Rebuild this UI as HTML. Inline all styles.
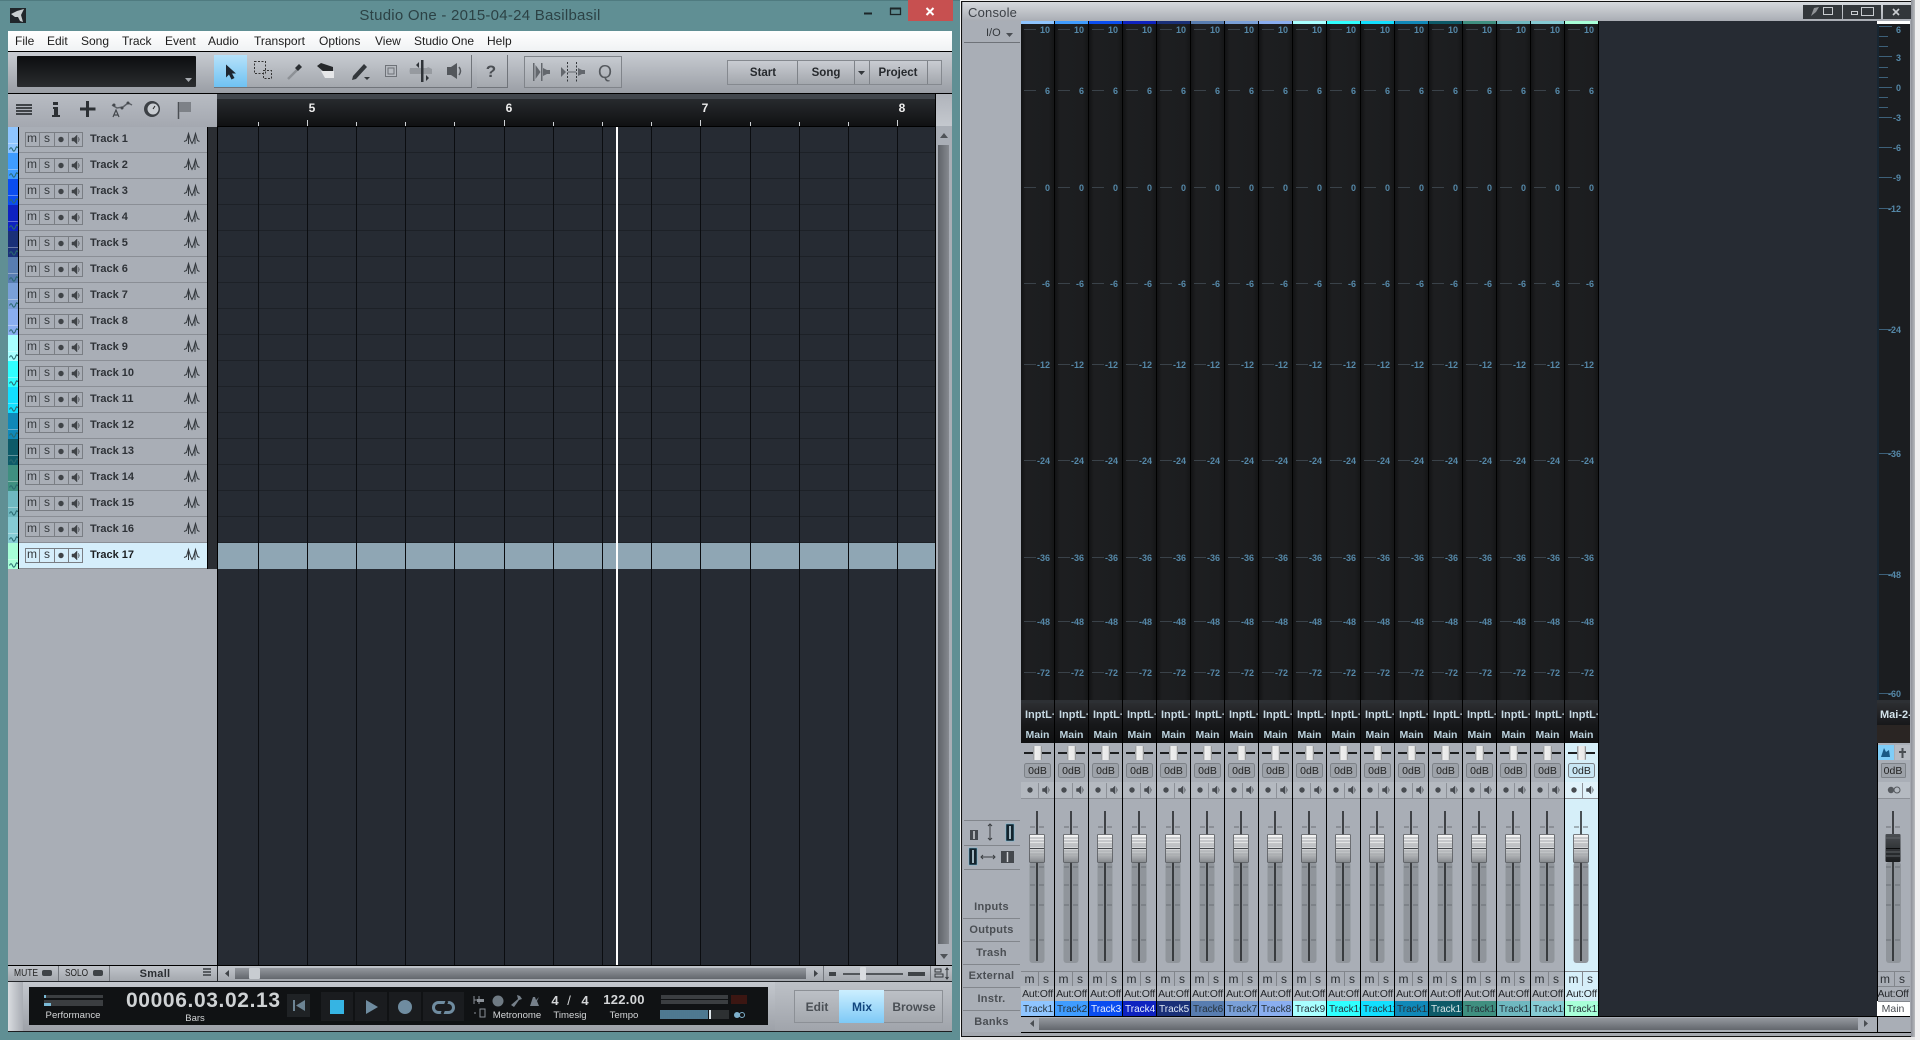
<!DOCTYPE html>
<html><head><meta charset="utf-8"><title>Studio One</title>
<style>
html,body{margin:0;padding:0}
body{width:1920px;height:1040px;overflow:hidden;position:relative;background:#f0f0f0;font-family:"Liberation Sans",sans-serif}
.a{position:absolute}
.x{position:absolute;white-space:nowrap;z-index:3}
.c{transform:translateX(-50%)}
.mn{font-size:12px;color:#1c1c1c;top:34px;line-height:15px}
.ov{position:absolute;left:0;top:0;z-index:2}
.t{position:absolute;left:19px;width:188px;height:26px;box-sizing:border-box;background:#a9aeb6;border-bottom:1px solid #8a8e95}
.st{position:absolute;left:8px;width:10px;height:26px}
.x.tn{left:90px;font-size:11px;font-weight:bold;color:#2e3237;line-height:14px;margin-top:1px}
.x.bm{font-size:12px;color:#33373b;line-height:12px;text-align:center;width:14px}
.ch{position:absolute;top:0;width:34px;height:1016px;box-sizing:border-box;background:#a9aeb6;border-right:1px solid #000}
.ct{position:absolute;left:0;right:0;top:21px;height:3px;background:var(--c)}
.mt{position:absolute;left:0;right:0;top:24px;height:679px;background:linear-gradient(90deg,#121314,#1d1e20 15%,#1c1d1f 85%,#151617)}
.mt b{position:absolute;left:3px;width:26px;margin-top:1px;text-align:right;font-size:9px;line-height:12px;color:#5588a8;z-index:3}
.mt b:before{content:"";position:absolute;left:0;width:12px;top:5px;height:1px;background:#3a4249}
.mt b:nth-child(1){top:-1px}.mt b:nth-child(2){top:60px}.mt b:nth-child(3){top:157px}.mt b:nth-child(4){top:253px}.mt b:nth-child(5){top:334px}.mt b:nth-child(6){top:430px}.mt b:nth-child(7){top:527px}.mt b:nth-child(8){top:591px}.mt b:nth-child(9){top:642px}
.ch p{position:absolute;margin:0;z-index:3;white-space:nowrap;overflow:hidden;text-align:center;left:0;width:33px}
.ch p.i{top:703px;height:22px;line-height:24px;font-size:11px;font-weight:bold;color:#c6d8e2;background:linear-gradient(#2c2e31,#17181a);text-align:left;padding-left:4px;width:29px}
.ch p.o{top:725px;height:18px;line-height:20px;font-size:10.5px;font-weight:bold;color:#bcd3de;background:linear-gradient(#17181a,#0f1011)}
.ch p.d{top:764px;height:14px;line-height:14px;font-size:10.5px;color:#222}
.ch p.m,.ch p.s{top:972px;height:14px;line-height:15px;font-size:12px;color:#2c3034;width:17px}
.ch p.s{left:17px;width:16px}
.ch p.u{top:986px;height:15px;line-height:16px;font-size:10.5px;color:#23262a;letter-spacing:-.25px;background:#b3b8bf}
.ch p.n{top:1001px;height:15px;line-height:17px;font-size:10px;background:var(--c);color:var(--f,#26323a);text-align:left;padding-left:2px;width:31px}
.lc{left:963px;width:57px;text-align:center;font-size:11px;font-weight:bold;color:#4a4e53;line-height:23px;height:22px;border-bottom:1px solid #82868c;letter-spacing:.3px}
.wt{color:#d4d6d8;line-height:13px}
.ml{right:19px;font-size:9px;font-weight:bold;color:#5588a8;line-height:12px}
</style></head>
<body>
<!-- left window -->
<div class="a" style="left:0;top:0;width:960px;height:1040px;background:#608f94;border-top:1px solid #4f7b80;box-sizing:border-box"></div>
<div class="a" style="left:908px;top:0;width:45px;height:21px;background:#c75050"></div>
<div class="x c" style="left:480px;top:7px;font-size:15px;color:#2c4245;line-height:18px;letter-spacing:.25px">Studio One - 2015-04-24 Basilbasil</div>
<div class="a" style="left:8px;top:31px;width:944px;height:20px;background:linear-gradient(#fff,#f0f2f4)"></div>
<div class="a" style="left:8px;top:51px;width:944px;height:1px;background:#000"></div>
<span class="x mn" style="left:15px">File</span><span class="x mn" style="left:47px">Edit</span><span class="x mn" style="left:81px">Song</span><span class="x mn" style="left:122px">Track</span><span class="x mn" style="left:165px">Event</span><span class="x mn" style="left:208px">Audio</span><span class="x mn" style="left:254px">Transport</span><span class="x mn" style="left:319px">Options</span><span class="x mn" style="left:375px">View</span><span class="x mn" style="left:414px">Studio One</span><span class="x mn" style="left:487px">Help</span>
<!-- toolbar -->
<div class="a" style="left:8px;top:52px;width:944px;height:41px;background:linear-gradient(#c8ccd2,#9a9ea5)"></div>
<div class="a" style="left:8px;top:93px;width:944px;height:1px;background:#000"></div>
<div class="a" style="left:17px;top:56px;width:179px;height:31px;background:linear-gradient(#0c0d0f,#2a2c2f);border-radius:1px"></div>
<div class="a" style="left:214px;top:55px;width:258px;height:33px;background:linear-gradient(#c6cad0,#a4a8ae);border-right:1px solid #70747a;border-bottom:1px solid #70747a;box-sizing:border-box"></div>
<div class="a" style="left:214px;top:55px;width:33px;height:32px;background:linear-gradient(#b6e2fa,#6fc2f2)"></div>
<div class="a" style="left:477px;top:55px;width:31px;height:33px;background:linear-gradient(#c6cad0,#a4a8ae);border-right:1px solid #70747a;border-bottom:1px solid #70747a;box-sizing:border-box"></div>
<div class="x c" style="left:491px;top:62px;font-size:17px;font-weight:bold;color:#4b4f54;line-height:20px">?</div>
<div class="a" style="left:524px;top:56px;width:98px;height:32px;background:linear-gradient(#c6cad0,#a4a8ae);border:1px solid #80848a;box-sizing:border-box"></div>
<div class="x c" style="left:605px;top:62px;font-size:18px;color:#54585d;line-height:20px">Q</div>
<div class="a" style="left:727px;top:60px;width:215px;height:25px;background:linear-gradient(#c9ccd2,#a3a7ad);border:1px solid #85898f;box-sizing:border-box"></div>
<div class="x c" style="left:763px;top:66px;font-size:11.5px;font-weight:bold;color:#26292d;line-height:14px">Start</div>
<div class="x c" style="left:826px;top:66px;font-size:11.5px;font-weight:bold;color:#26292d;line-height:14px">Song</div>
<div class="x c" style="left:898px;top:66px;font-size:11.5px;font-weight:bold;color:#26292d;line-height:14px">Project</div>
<!-- header row -->
<div class="a" style="left:8px;top:94px;width:209px;height:33px;background:linear-gradient(#b8bcc3,#a4a8b0)"></div>
<div class="a" style="left:217px;top:94px;width:718px;height:5px;background:#41464c"></div>
<div class="a" style="left:217px;top:99px;width:718px;height:27px;background:linear-gradient(#272a2e,#101113)"></div>
<div class="a" style="left:217px;top:126px;width:735px;height:1px;background:#000"></div>
<span class="x c" style="left:312px;top:101px;font-size:12px;font-weight:bold;color:#eee;line-height:14px">5</span>
<span class="x c" style="left:509px;top:101px;font-size:12px;font-weight:bold;color:#eee;line-height:14px">6</span>
<span class="x c" style="left:705px;top:101px;font-size:12px;font-weight:bold;color:#eee;line-height:14px">7</span>
<span class="x c" style="left:902px;top:101px;font-size:12px;font-weight:bold;color:#eee;line-height:14px">8</span>
<!-- side scroll -->
<div class="a" style="left:935px;top:94px;width:17px;height:872px;background:#a9aeb6;border-left:1px solid #000;box-sizing:border-box"></div>
<div class="a" style="left:936px;top:94px;width:16px;height:32px;background:linear-gradient(#b0b4bb,#c4c8ce)"></div>
<div class="a" style="left:938px;top:145px;width:11px;height:799px;background:linear-gradient(90deg,#5f6369,#85898f)"></div>
<!-- arrangement -->
<div class="a" style="left:217px;top:127px;width:718px;height:838px;background:#262b33"></div>
<div class="a" style="left:218px;top:127px;width:717px;height:442px;background:repeating-linear-gradient(#262b33 0 25px,#1d2127 25px 26px)"></div>
<div class="a" style="left:218px;top:543px;width:717px;height:26px;background:#8fa6b4"></div>
<!-- track list -->
<div class="a" style="left:8px;top:127px;width:210px;height:838px;background:#a9aeb6"></div>
<div class="a" style="left:207px;top:127px;width:10px;height:442px;background:#2b2e33;border-left:1px solid #000;box-sizing:border-box"></div>
<div class="a" style="left:18px;top:127px;width:1px;height:442px;background:#000"></div>
<div class="t" style="top:127px"></div><div class="st" style="top:127px;background:#8fc5ff"></div><span class="x tn" style="top:131px">Track 1</span>
<div class="t" style="top:153px"></div><div class="st" style="top:153px;background:#3f9cff"></div><span class="x tn" style="top:157px">Track 2</span>
<div class="t" style="top:179px"></div><div class="st" style="top:179px;background:#0a4df0"></div><span class="x tn" style="top:183px">Track 3</span>
<div class="t" style="top:205px"></div><div class="st" style="top:205px;background:#0e22c0"></div><span class="x tn" style="top:209px">Track 4</span>
<div class="t" style="top:231px"></div><div class="st" style="top:231px;background:#1a3078"></div><span class="x tn" style="top:235px">Track 5</span>
<div class="t" style="top:257px"></div><div class="st" style="top:257px;background:#587db0"></div><span class="x tn" style="top:261px">Track 6</span>
<div class="t" style="top:283px"></div><div class="st" style="top:283px;background:#7aa0d8"></div><span class="x tn" style="top:287px">Track 7</span>
<div class="t" style="top:309px"></div><div class="st" style="top:309px;background:#8aaef0"></div><span class="x tn" style="top:313px">Track 8</span>
<div class="t" style="top:335px"></div><div class="st" style="top:335px;background:#a8ffff"></div><span class="x tn" style="top:339px">Track 9</span>
<div class="t" style="top:361px"></div><div class="st" style="top:361px;background:#30ffff"></div><span class="x tn" style="top:365px">Track 10</span>
<div class="t" style="top:387px"></div><div class="st" style="top:387px;background:#12dfff"></div><span class="x tn" style="top:391px">Track 11</span>
<div class="t" style="top:413px"></div><div class="st" style="top:413px;background:#1088b8"></div><span class="x tn" style="top:417px">Track 12</span>
<div class="t" style="top:439px"></div><div class="st" style="top:439px;background:#0d5a68"></div><span class="x tn" style="top:443px">Track 13</span>
<div class="t" style="top:465px"></div><div class="st" style="top:465px;background:#3f8f80"></div><span class="x tn" style="top:469px">Track 14</span>
<div class="t" style="top:491px"></div><div class="st" style="top:491px;background:#6fb8c0"></div><span class="x tn" style="top:495px">Track 15</span>
<div class="t" style="top:517px"></div><div class="st" style="top:517px;background:#86cbd4"></div><span class="x tn" style="top:521px">Track 16</span>
<div class="t" style="top:543px;background:#d5eefb"></div><div class="st" style="top:543px;background:#a8ffd8"></div><span class="x tn" style="top:547px;color:#1c1f22">Track 17</span>
<!-- m s labels track rows -->
<span class="x bm" style="left:25px;top:132px">m</span><span class="x bm" style="left:40px;top:132px">s</span>
<span class="x bm" style="left:25px;top:158px">m</span><span class="x bm" style="left:40px;top:158px">s</span>
<span class="x bm" style="left:25px;top:184px">m</span><span class="x bm" style="left:40px;top:184px">s</span>
<span class="x bm" style="left:25px;top:210px">m</span><span class="x bm" style="left:40px;top:210px">s</span>
<span class="x bm" style="left:25px;top:236px">m</span><span class="x bm" style="left:40px;top:236px">s</span>
<span class="x bm" style="left:25px;top:262px">m</span><span class="x bm" style="left:40px;top:262px">s</span>
<span class="x bm" style="left:25px;top:288px">m</span><span class="x bm" style="left:40px;top:288px">s</span>
<span class="x bm" style="left:25px;top:314px">m</span><span class="x bm" style="left:40px;top:314px">s</span>
<span class="x bm" style="left:25px;top:340px">m</span><span class="x bm" style="left:40px;top:340px">s</span>
<span class="x bm" style="left:25px;top:366px">m</span><span class="x bm" style="left:40px;top:366px">s</span>
<span class="x bm" style="left:25px;top:392px">m</span><span class="x bm" style="left:40px;top:392px">s</span>
<span class="x bm" style="left:25px;top:418px">m</span><span class="x bm" style="left:40px;top:418px">s</span>
<span class="x bm" style="left:25px;top:444px">m</span><span class="x bm" style="left:40px;top:444px">s</span>
<span class="x bm" style="left:25px;top:470px">m</span><span class="x bm" style="left:40px;top:470px">s</span>
<span class="x bm" style="left:25px;top:496px">m</span><span class="x bm" style="left:40px;top:496px">s</span>
<span class="x bm" style="left:25px;top:522px">m</span><span class="x bm" style="left:40px;top:522px">s</span>
<span class="x bm" style="left:25px;top:548px">m</span><span class="x bm" style="left:40px;top:548px">s</span>
<!-- bottom bar -->
<div class="a" style="left:8px;top:965px;width:944px;height:1px;background:#000"></div>
<div class="a" style="left:8px;top:966px;width:944px;height:15px;background:linear-gradient(#c0c4ca,#a4a8ae)"></div>
<div class="a" style="left:8px;top:981px;width:944px;height:1px;background:#23262a"></div>
<span class="x" style="left:14px;top:968px;font-size:10px;color:#222;line-height:12px;transform:scaleX(.85);transform-origin:left">MUTE</span>
<span class="x" style="left:65px;top:968px;font-size:10px;color:#222;line-height:12px;transform:scaleX(.83);transform-origin:left">SOLO</span>
<span class="x c" style="left:155px;top:968px;font-size:11px;font-weight:bold;color:#2b2e32;line-height:13px;letter-spacing:.3px">Small</span>
<div class="a" style="left:235px;top:968px;width:571px;height:11px;background:linear-gradient(#94989e,#63676d)"></div>
<!-- transport -->
<div class="a" style="left:8px;top:982px;width:767px;height:49px;background:linear-gradient(#c4c8ce,#9da1a8)"></div>
<div class="a" style="left:8px;top:982px;width:15px;height:49px;background:linear-gradient(90deg,#d9dce0,#a8acb3)"></div>
<div class="a" style="left:775px;top:982px;width:177px;height:49px;background:linear-gradient(#bdc1c7,#a0a4ab)"></div>
<div class="a" style="left:8px;top:1031px;width:944px;height:1px;background:#1b1d20"></div>
<div class="a" style="left:29px;top:987px;width:739px;height:38px;background:#101214"></div>
<div class="a" style="left:794px;top:990px;width:149px;height:33px;background:linear-gradient(#bcc0c6,#a4a8ae);border:1px solid #8c9096;box-sizing:border-box"></div>
<div class="a" style="left:839px;top:990px;width:45px;height:33px;background:linear-gradient(#ccefff,#7ec9f6)"></div>
<span class="x c" style="left:817px;top:1000px;font-size:12px;font-weight:bold;color:#4a4f55;line-height:14px">Edit</span>
<span class="x c" style="left:862px;top:1000px;font-size:12px;font-weight:bold;color:#12467e;line-height:14px">Mix</span>
<span class="x c" style="left:914px;top:1000px;font-size:12px;font-weight:bold;color:#4a4f55;line-height:14px">Browse</span>
<span class="x c wt" style="left:73px;top:1009px;font-size:9.6px">Performance</span>
<span class="x wt" style="left:126px;top:990px;font-size:21px;font-weight:bold;line-height:22px;letter-spacing:.62px;color:#cfd2d4">00006.03.02.13</span>
<span class="x c wt" style="left:195px;top:1012px;font-size:9.5px">Bars</span>
<span class="x c wt" style="left:517px;top:1009px;font-size:9.6px">Metronome</span>
<span class="x c wt" style="left:555px;top:993px;font-size:13px;font-weight:bold;line-height:15px">4</span>
<span class="x c wt" style="left:569px;top:993px;font-size:13px;line-height:15px">/</span>
<span class="x c wt" style="left:585px;top:993px;font-size:13px;font-weight:bold;line-height:15px">4</span>
<span class="x c wt" style="left:570px;top:1009px;font-size:9.6px">Timesig</span>
<span class="x c wt" style="left:624px;top:991px;font-size:13px;line-height:17px;letter-spacing:.3px;font-weight:bold">122.00</span>
<span class="x c wt" style="left:624px;top:1009px;font-size:9.6px">Tempo</span>

<!-- Console -->
<div class="a" style="left:960px;top:0;width:2px;height:1040px;background:#f2f3f4"></div>
<div class="a" style="left:961px;top:1px;width:952px;height:1036px;background:#a4a8af;border:1px solid #111;box-sizing:border-box"></div>
<div class="a" style="left:963px;top:21px;width:58px;height:1011px;background:#a9aeb6"></div>
<span class="x" style="left:986px;top:25px;font-size:11px;color:#33373b;line-height:16px">I/O</span>
<div class="a" style="left:964px;top:42px;width:56px;height:1px;background:#6e7278"></div>
<div class="a" style="left:1599px;top:21px;width:278px;height:995px;background:#262b33"></div>
<div class="a lc x" style="top:896px">Inputs</div>
<div class="a lc x" style="top:919px">Outputs</div>
<div class="a lc x" style="top:942px">Trash</div>
<div class="a lc x" style="top:965px">External</div>
<div class="a lc x" style="top:988px">Instr.</div>
<div class="a lc x" style="top:1011px;border-bottom:0">Banks</div>

<div class="ch" style="left:1021px;--c:#8fc5ff"><i class="ct"></i><div class="mt"><b>10</b><b>6</b><b>0</b><b>-6</b><b>-12</b><b>-24</b><b>-36</b><b>-48</b><b>-72</b></div><p class="i">InptL+</p><p class="o">Main</p><p class="d">0dB</p><p class="m">m</p><p class="s">s</p><p class="u">Aut:Off</p><p class="n">Track1</p></div>
<div class="ch" style="left:1055px;--c:#3f9cff"><i class="ct"></i><div class="mt"><b>10</b><b>6</b><b>0</b><b>-6</b><b>-12</b><b>-24</b><b>-36</b><b>-48</b><b>-72</b></div><p class="i">InptL+</p><p class="o">Main</p><p class="d">0dB</p><p class="m">m</p><p class="s">s</p><p class="u">Aut:Off</p><p class="n">Track2</p></div>
<div class="ch" style="left:1089px;--c:#0a4df0;--f:#e8f0ff"><i class="ct"></i><div class="mt"><b>10</b><b>6</b><b>0</b><b>-6</b><b>-12</b><b>-24</b><b>-36</b><b>-48</b><b>-72</b></div><p class="i">InptL+</p><p class="o">Main</p><p class="d">0dB</p><p class="m">m</p><p class="s">s</p><p class="u">Aut:Off</p><p class="n">Track3</p></div>
<div class="ch" style="left:1123px;--c:#0e22c0;--f:#e8f0ff"><i class="ct"></i><div class="mt"><b>10</b><b>6</b><b>0</b><b>-6</b><b>-12</b><b>-24</b><b>-36</b><b>-48</b><b>-72</b></div><p class="i">InptL+</p><p class="o">Main</p><p class="d">0dB</p><p class="m">m</p><p class="s">s</p><p class="u">Aut:Off</p><p class="n">Track4</p></div>
<div class="ch" style="left:1157px;--c:#1a3078;--f:#dfe8f5"><i class="ct"></i><div class="mt"><b>10</b><b>6</b><b>0</b><b>-6</b><b>-12</b><b>-24</b><b>-36</b><b>-48</b><b>-72</b></div><p class="i">InptL+</p><p class="o">Main</p><p class="d">0dB</p><p class="m">m</p><p class="s">s</p><p class="u">Aut:Off</p><p class="n">Track5</p></div>
<div class="ch" style="left:1191px;--c:#587db0"><i class="ct"></i><div class="mt"><b>10</b><b>6</b><b>0</b><b>-6</b><b>-12</b><b>-24</b><b>-36</b><b>-48</b><b>-72</b></div><p class="i">InptL+</p><p class="o">Main</p><p class="d">0dB</p><p class="m">m</p><p class="s">s</p><p class="u">Aut:Off</p><p class="n">Track6</p></div>
<div class="ch" style="left:1225px;--c:#7aa0d8"><i class="ct"></i><div class="mt"><b>10</b><b>6</b><b>0</b><b>-6</b><b>-12</b><b>-24</b><b>-36</b><b>-48</b><b>-72</b></div><p class="i">InptL+</p><p class="o">Main</p><p class="d">0dB</p><p class="m">m</p><p class="s">s</p><p class="u">Aut:Off</p><p class="n">Track7</p></div>
<div class="ch" style="left:1259px;--c:#8aaef0"><i class="ct"></i><div class="mt"><b>10</b><b>6</b><b>0</b><b>-6</b><b>-12</b><b>-24</b><b>-36</b><b>-48</b><b>-72</b></div><p class="i">InptL+</p><p class="o">Main</p><p class="d">0dB</p><p class="m">m</p><p class="s">s</p><p class="u">Aut:Off</p><p class="n">Track8</p></div>
<div class="ch" style="left:1293px;--c:#a8ffff"><i class="ct"></i><div class="mt"><b>10</b><b>6</b><b>0</b><b>-6</b><b>-12</b><b>-24</b><b>-36</b><b>-48</b><b>-72</b></div><p class="i">InptL+</p><p class="o">Main</p><p class="d">0dB</p><p class="m">m</p><p class="s">s</p><p class="u">Aut:Off</p><p class="n">Track9</p></div>
<div class="ch" style="left:1327px;--c:#30ffff"><i class="ct"></i><div class="mt"><b>10</b><b>6</b><b>0</b><b>-6</b><b>-12</b><b>-24</b><b>-36</b><b>-48</b><b>-72</b></div><p class="i">InptL+</p><p class="o">Main</p><p class="d">0dB</p><p class="m">m</p><p class="s">s</p><p class="u">Aut:Off</p><p class="n">Track10</p></div>
<div class="ch" style="left:1361px;--c:#12dfff"><i class="ct"></i><div class="mt"><b>10</b><b>6</b><b>0</b><b>-6</b><b>-12</b><b>-24</b><b>-36</b><b>-48</b><b>-72</b></div><p class="i">InptL+</p><p class="o">Main</p><p class="d">0dB</p><p class="m">m</p><p class="s">s</p><p class="u">Aut:Off</p><p class="n">Track11</p></div>
<div class="ch" style="left:1395px;--c:#1088b8"><i class="ct"></i><div class="mt"><b>10</b><b>6</b><b>0</b><b>-6</b><b>-12</b><b>-24</b><b>-36</b><b>-48</b><b>-72</b></div><p class="i">InptL+</p><p class="o">Main</p><p class="d">0dB</p><p class="m">m</p><p class="s">s</p><p class="u">Aut:Off</p><p class="n">Track12</p></div>
<div class="ch" style="left:1429px;--c:#0d5a68"><i class="ct"></i><div class="mt"><b>10</b><b>6</b><b>0</b><b>-6</b><b>-12</b><b>-24</b><b>-36</b><b>-48</b><b>-72</b></div><p class="i">InptL+</p><p class="o">Main</p><p class="d">0dB</p><p class="m">m</p><p class="s">s</p><p class="u">Aut:Off</p><p class="n" style="color:#d9e6e8">Track13</p></div>
<div class="ch" style="left:1463px;--c:#3f8f80"><i class="ct"></i><div class="mt"><b>10</b><b>6</b><b>0</b><b>-6</b><b>-12</b><b>-24</b><b>-36</b><b>-48</b><b>-72</b></div><p class="i">InptL+</p><p class="o">Main</p><p class="d">0dB</p><p class="m">m</p><p class="s">s</p><p class="u">Aut:Off</p><p class="n">Track14</p></div>
<div class="ch" style="left:1497px;--c:#6fb8c0"><i class="ct"></i><div class="mt"><b>10</b><b>6</b><b>0</b><b>-6</b><b>-12</b><b>-24</b><b>-36</b><b>-48</b><b>-72</b></div><p class="i">InptL+</p><p class="o">Main</p><p class="d">0dB</p><p class="m">m</p><p class="s">s</p><p class="u">Aut:Off</p><p class="n">Track15</p></div>
<div class="ch" style="left:1531px;--c:#86cbd4"><i class="ct"></i><div class="mt"><b>10</b><b>6</b><b>0</b><b>-6</b><b>-12</b><b>-24</b><b>-36</b><b>-48</b><b>-72</b></div><p class="i">InptL+</p><p class="o">Main</p><p class="d">0dB</p><p class="m">m</p><p class="s">s</p><p class="u">Aut:Off</p><p class="n">Track16</p></div>
<div class="ch" style="left:1565px;--c:#a8ffd8;background:#d6eff9"><i class="ct"></i><div class="mt"><b>10</b><b>6</b><b>0</b><b>-6</b><b>-12</b><b>-24</b><b>-36</b><b>-48</b><b>-72</b></div><p class="i">InptL+</p><p class="o">Main</p><p class="d">0dB</p><p class="m">m</p><p class="s">s</p><p class="u" style="background:#d6eff9">Aut:Off</p><p class="n">Track17</p></div>

<!-- console header above channels -->
<div class="a" style="left:963px;top:1px;width:948px;height:1px;background:#111;z-index:1"></div>
<div class="a" style="left:963px;top:2px;width:948px;height:19px;background:linear-gradient(#d6d9dd,#a9adb4);z-index:1"></div>
<div class="a" style="left:1021px;top:0;width:578px;height:1px;background:#f0f0f0;z-index:1"></div>
<span class="x" style="left:968px;top:5px;font-size:13px;color:#3c4046;line-height:16px;letter-spacing:.2px">Console</span>

<!-- console scrollbar & main -->
<div class="a" style="left:1021px;top:1016px;width:856px;height:16px;background:#a9aeb6;border-top:1px solid #000;box-sizing:border-box"></div>
<div class="a" style="left:1039px;top:1018px;width:819px;height:12px;background:linear-gradient(#94989e,#63676d)"></div>
<div class="a" style="left:1021px;top:1032px;width:890px;height:1px;background:#000"></div>
<div class="a" style="left:1877px;top:21px;width:33px;height:995px;background:#a9aeb6;border-left:1px solid #000;box-sizing:border-box"></div>
<div class="a" style="left:1877px;top:21px;width:33px;height:3px;background:#fff"></div>
<div class="a" style="left:1877px;top:24px;width:33px;height:679px;background:#1b1d20;border-left:2px solid #182632;box-sizing:border-box"></div>
<div class="a" style="left:1877px;top:703px;width:33px;height:22px;background:linear-gradient(#2c2e31,#17181a)"></div>
<div class="a" style="left:1877px;top:725px;width:33px;height:18px;background:#2a2523"></div>
<div class="a" style="left:1877px;top:1001px;width:33px;height:15px;background:#fff"></div>
<div class="a" style="left:1877px;top:1016px;width:33px;height:16px;background:#a9aeb6;border-left:1px solid #000;border-top:1px solid #000;box-sizing:border-box"></div>
<span class="x ml" style="top:24px">6</span>
<span class="x ml" style="top:52px">3</span>
<span class="x ml" style="top:82px">0</span>
<span class="x ml" style="top:112px">-3</span>
<span class="x ml" style="top:142px">-6</span>
<span class="x ml" style="top:172px">-9</span>
<span class="x ml" style="top:203px">-12</span>
<span class="x ml" style="top:324px">-24</span>
<span class="x ml" style="top:448px">-36</span>
<span class="x ml" style="top:569px">-48</span>
<span class="x ml" style="top:688px">-60</span>
<div class="x" style="left:1880px;top:708px;width:30px;overflow:hidden;font-size:11px;font-weight:bold;color:#d3e2ea;line-height:14px">Mai-2-</div>
<span class="x c" style="left:1893px;top:764px;font-size:10.5px;color:#222;line-height:14px">0dB</span>
<span class="x c" style="left:1885px;top:973px;font-size:12px;color:#2c3034;line-height:13px">m</span>
<span class="x c" style="left:1902px;top:973px;font-size:12px;color:#2c3034;line-height:13px">s</span>
<span class="x c" style="left:1893px;top:987px;font-size:10.5px;color:#23262a;line-height:15px;letter-spacing:-.2px">Aut:Off</span>
<span class="x c" style="left:1893px;top:1002px;font-size:10.5px;color:#4a4e53;line-height:15px">Main</span>

<!-- overlay shapes -->
<svg class="ov" width="1920" height="1040" viewBox="0 0 1920 1040" xmlns="http://www.w3.org/2000/svg">
<defs>
<linearGradient id="kg" x1="0" x2="0" y1="0" y2="1"><stop offset="0" stop-color="#f6f6f6"/><stop offset=".55" stop-color="#d0d2d4"/><stop offset="1" stop-color="#85898d"/></linearGradient>
<linearGradient id="kh" x1="0" x2="1" y1="0" y2="0"><stop offset="0" stop-color="#8a8d90"/><stop offset=".25" stop-color="#eee"/><stop offset=".8" stop-color="#e8e8e8"/><stop offset="1" stop-color="#77797c"/></linearGradient>
<linearGradient id="kd" x1="0" x2="0" y1="0" y2="1"><stop offset="0" stop-color="#4a4e52"/><stop offset="1" stop-color="#1a1c1e"/></linearGradient>
<g id="tr">
<rect x="25.5" y="5.5" width="57" height="14" fill="none" stroke="#7a7e84"/>
<path d="M39.5 6v13M54.5 6v13M68.5 6v13" stroke="#7a7e84"/>
<circle cx="61" cy="12.5" r="2.7" fill="#3f4347"/>
<path d="M72 11h2l3-3v9l-3-3h-2zM78.500 10q1.500 2.500 0 5" fill="#3f4347" stroke="#3f4347" stroke-width=".5"/>
<path d="M184 14.500l2.500-1 2-7 2 7 1.500 3 1.500-3 2-7 2 7 2 1M188.500 8v9M195 8v9" fill="none" stroke="#33383d" stroke-width="1"/>
<rect x="8" y="16" width="10" height="1" fill="#fff" opacity=".35"/>
<path d="M9.500 22.500q1.500-3.500 3 0t3-.5 2-1" fill="none" stroke="#2a6a70" stroke-width="1"/>
</g>
<g id="cs">
<rect x="3" y="752" width="27" height="2" fill="#1c1e20"/>
<rect x="12" y="746" width="9" height="14" rx="1" fill="url(#kh)"/>
<rect x="3.500" y="763.500" width="26" height="14" rx="2" style="fill:var(--b,#9da2a9)" stroke="#7d8288"/>
<rect x="0" y="782" width="33" height="16" style="fill:var(--r,#b4b9c0)"/>
<path d="M0 798.500h33M17.500 783v15" stroke="#8d9198"/>
<circle cx="9" cy="790" r="2.700" fill="#474b50"/>
<path d="M21.500 788.500h2l2.500-2.500v8l-2.500-2.500h-2zM27.500 787.500q1.500 2.500 0 5" fill="#474b50" stroke="#474b50" stroke-width=".5"/>
<rect x="8.500" y="862" width="15" height="101" rx="3" fill="#90959b"/>
<rect x="15.250" y="811" width="1.500" height="150" fill="#1c1e21"/>
<path d="M9 827h5M18 827h5M9 867h5M18 867h5M9 885h5M18 885h5M9 905h5M18 905h5M9 940h5M18 940h5" stroke="#6a6f74"/>
<rect x="8.500" y="834.500" width="15" height="28" rx="1" fill="url(#kg)" stroke="#55585c" stroke-width=".8"/>
<path d="M9 838h14M9 841h14M9 844h14M9 846h14M9 851h14M9 854h14M9 857h14" stroke="#a5a8ac"/>
<path d="M9 848.500h14" stroke="#45484c"/>
<path d="M0 971.500h33M0 986.500h33M17.500 972v14" stroke="#82868c"/>
<rect x="0" y="700" width="33" height="3" fill="#2d3034"/>
</g>
</defs>
<!-- logo -->
<rect x="10" y="8" width="16" height="15" fill="#20262a"/><path d="M11 14l6-3 7-2-3 6 2 7-3-1-2-4-3 0z" fill="#c8ced0"/>
<!-- window controls -->
<path d="M864 13.500h8" stroke="#1c2628" stroke-width="2"/>
<rect x="890.500" y="8.500" width="10" height="6" fill="none" stroke="#1c2628" stroke-width="1.300"/><path d="M890 8.500h11" stroke="#1c2628" stroke-width="2"/>
<path d="M926.500 8l7 7M933.500 8l-7 7" stroke="#fff" stroke-width="2"/>
<!-- combo arrow -->
<path d="M185 78h7l-3.500 4z" fill="#a6aaaf"/>
<!-- tools -->
<path d="M226 64.500v13l3-3 2.500 5 3-1.500-2.500-4.500h4z" fill="#1d2630"/>
<rect x="254.500" y="61.500" width="11" height="12" fill="none" stroke="#333" stroke-dasharray="2 1.500"/>
<rect x="263.500" y="70.500" width="8" height="8" fill="none" stroke="#333" stroke-dasharray="2 1.500"/>
<path d="M288 79l10-10" stroke="#8d9196" stroke-width="2.500"/><path d="M295 68l4-4 3 3-4 4z" fill="#2b2f33"/>
<path d="M317 66l4-3 12 4v5h-9z" fill="#26282b"/><path d="M321 71l13 0v7h-9z" fill="#e6e7e9"/>
<path d="M353 76l11-12 3 3-11 12-4 1z" fill="#33373b"/><path d="M364 77h6l-3 3z" fill="#33373b"/>
<rect x="385.500" y="65.500" width="11" height="11" fill="#b7bbc1" stroke="#6e7278"/><rect x="388" y="68" width="6" height="6" fill="none" stroke="#6e7278"/>
<path d="M411 68h-1l-.5 3 .5 3h22v-5l-4-2-1 1h-16z" fill="#8c9096" opacity=".75"/><rect x="421" y="60" width="2.500" height="22" fill="#2f3338"/><path d="M419 62v6l-3-3zM426 75v6l3-3z" fill="#2f3338"/>
<path d="M447 67h4l6-4v16l-6-4h-4z" fill="#53575c"/><path d="M459 67q3 4 0 8" fill="none" stroke="#53575c" stroke-width="1.500"/>
<path d="M533 63h1.500v18h-1.500zM535.500 65l5 7-5 7zM541 63h1.500v18h-1.500zM543 68l4 2h3v4h-3l-4 2z" fill="#63676d"/>
<path d="M561 67l5 5-5 5zM578 68l4 2h3v4h-3l-4 2z" fill="#63676d"/><path d="M567.500 62v20M576.500 62v20" stroke="#33373b" stroke-dasharray="2 1.500"/><path d="M568 72h8" stroke="#63676d"/>
<!-- top buttons -->
<path d="M797.500 61v23M854.500 61v23M869.500 61v23M927.500 61v23" stroke="#7e8288"/>
<path d="M858 71h7l-3.500 4z" fill="#33373b"/>
<!-- header icons -->
<path d="M16 105h16M16 108h16M16 111h16M16 114h16" stroke="#303438" stroke-width="1.700"/>
<path d="M53 102h5v3h-5zM53 107h5v8h2v2h-8v-2h2v-6h-1z" fill="#2c3034"/>
<path d="M86 101h3v6.500h6.500v3h-6.500v6.500h-3v-6.500h-6v-3h6z" fill="#2c3034"/>
<path d="M112 105l5 3 6-1 5-4 4 2" fill="none" stroke="#5c6066" stroke-width="1.500"/><circle cx="114" cy="105" r="1.500" fill="#44484d"/><circle cx="122" cy="108" r="1.500" fill="#44484d"/><circle cx="128" cy="103" r="1.500" fill="#44484d"/><path d="M113 117l3-7 3 7M114 115h4" fill="none" stroke="#44484d" stroke-width="1.200"/>
<circle cx="152" cy="109" r="8" fill="#3c4045"/><circle cx="153" cy="109" r="5.500" fill="#c9cdd2"/><path d="M153 109l2-3" stroke="#222"/>
<path d="M178.500 102v17" stroke="#4a4e53" stroke-width="1.500"/><path d="M179 102h12v10h-12z" fill="#7d8187"/>
<!-- grid -->
<path d="M258.500 127v838M307.500 127v838M356.500 127v838M405.500 127v838M454.500 127v838M504.500 127v838M553.500 127v838M602.500 127v838M651.500 127v838M700.500 127v838M750.500 127v838M799.500 127v838M848.500 127v838M897.500 127v838" stroke="#0b0d10"/>
<path d="M217.500 127v838" stroke="#000"/>
<path d="M258.500 122v4M356.500 122v4M405.500 122v4M454.500 122v4M553.500 122v4M602.500 122v4M651.500 122v4M750.500 122v4M799.500 122v4M848.500 122v4M307.500 120v6M504.500 120v6M700.500 120v6M897.500 120v6" stroke="#cfd2d5"/>
<rect x="616" y="127" width="2" height="838" fill="#fff"/>
<!-- scroll arrows -->
<path d="M940 138h8l-4-5zM940 954h8l-4 5z" fill="#4f5358"/>
<!-- track rows -->
<use href="#tr" y="127"/><use href="#tr" y="153"/><use href="#tr" y="179"/><use href="#tr" y="205"/><use href="#tr" y="231"/><use href="#tr" y="257"/><use href="#tr" y="283"/><use href="#tr" y="309"/><use href="#tr" y="335"/><use href="#tr" y="361"/><use href="#tr" y="387"/><use href="#tr" y="413"/><use href="#tr" y="439"/><use href="#tr" y="465"/><use href="#tr" y="491"/><use href="#tr" y="517"/><use href="#tr" y="543"/>
<!-- bottom bar -->
<rect x="42" y="970" width="10" height="6" rx="2" fill="#3f4347"/><rect x="93" y="970" width="10" height="6" rx="2" fill="#3f4347"/>
<path d="M58.500 966v15M109.500 966v15M823.500 966v15M930.500 966v15" stroke="#74787e"/><path d="M217.500 966v15" stroke="#2a2d31"/>
<path d="M203 969h8M203 972h8M203 975h8" stroke="#3a3e42" stroke-width="1.500"/>
<path d="M229 970v7l-4-3.500zM814 970v7l4-3.500z" fill="#3f4347"/>
<rect x="249" y="968" width="11" height="11" rx="1" fill="#c8ccd1"/>
<rect x="829" y="972" width="7" height="4" fill="#3f4347"/><path d="M843 974h60" stroke="#33373b" stroke-width="1.500"/><rect x="860" y="967" width="6" height="13" rx="1" fill="#d9dce0"/><rect x="908" y="972" width="17" height="4" fill="#3f4347"/>
<path d="M935 969h6v3h-6zM935 974h8v3h-8z" fill="none" stroke="#33373b"/><path d="M947 968v11M945.500 970l1.500-2 1.500 2M945.500 977l1.500 2 1.500-2" fill="none" stroke="#33373b"/>
<!-- transport display -->
<rect x="44" y="995" width="59" height="3" fill="#3b3e41"/><rect x="44" y="1000" width="59" height="3" fill="#3b3e41"/><rect x="44" y="1003" width="59" height="3" fill="#3b3e41"/><rect x="44" y="1003" width="7" height="3" fill="#7ab9d6"/><rect x="44" y="995" width="2" height="3" fill="#7ab9d6"/>
<rect x="287" y="994" width="23" height="23" fill="#1f2225"/><path d="M294 1000v11" stroke="#6d8494" stroke-width="2"/><path d="M305 1000v11l-9-5.500z" fill="#6d8494"/>
<rect x="321" y="992" width="32" height="29" fill="#1a1c1f"/><rect x="330" y="1000" width="14" height="14" fill="#36b4e3"/>
<rect x="355" y="992" width="32" height="29" fill="#1a1c1f"/><path d="M366 1000l12 7-12 7z" fill="#6f8ca0"/>
<rect x="389" y="992" width="32" height="29" fill="#1a1c1f"/><circle cx="405" cy="1007" r="7" fill="#6f8ca0"/>
<rect x="423" y="992" width="41" height="29" fill="#1a1c1f"/><rect x="433.500" y="1002.500" width="20" height="10" rx="5" fill="none" stroke="#6f8ca0" stroke-width="3"/><path d="M447 1001l-5 13" stroke="#1a1c1f" stroke-width="3"/>
<path d="M474 996v8M479 996v8M474 1000h5M474 1013h2M480 1009v8h5v-8z" stroke="#8a9097" fill="none"/>
<rect x="477" y="999" width="7" height="3" fill="#8a9097"/>
<circle cx="498" cy="1001" r="5.500" fill="#6f7a83"/>
<path d="M511 1005l7-6-1-4 3 1 2 3-3 1-5 7z" fill="#76808a"/>
<path d="M530 1006l3-9h2l1 3 3-3-2 4 2 5z" fill="#76808a"/>
<rect x="661" y="995" width="67" height="4" fill="#3b3e41"/><rect x="661" y="1000" width="67" height="4" fill="#3b3e41"/><rect x="731" y="995" width="16" height="9" fill="#3b1612"/>
<path d="M661 1010v9M663 1010v9M665 1010v9M667 1010v9M669 1010v9M671 1010v9M673 1010v9M675 1010v9M677 1010v9M679 1010v9M681 1010v9M683 1010v9M685 1010v9M687 1010v9M689 1010v9M691 1010v9M693 1010v9M695 1010v9M697 1010v9M699 1010v9M701 1010v9M703 1010v9M705 1010v9M707 1010v9" stroke="#79bde3" stroke-width="1.200"/>
<path d="M710 1010v9" stroke="#e0e6ea" stroke-width="2"/>
<path d="M712 1010v9M714 1010v9M716 1010v9M718 1010v9M720 1010v9M722 1010v9M724 1010v9M726 1010v9M728 1010v9" stroke="#4a4d50"/>
<circle cx="737" cy="1015" r="3" fill="#7eb0cc"/><circle cx="742" cy="1015" r="2.500" fill="none" stroke="#7eb0cc"/>
<!-- console controls -->
<rect x="1803" y="5" width="39" height="14" fill="#33373b"/><rect x="1843" y="5" width="38" height="14" fill="#33373b"/><rect x="1883" y="5" width="28" height="14" fill="#33373b"/>
<rect x="1823.500" y="7.500" width="9" height="7" fill="none" stroke="#c9ccd0"/><path d="M1811 16l3-8 5-1-3 5z" fill="#8f9296"/>
<rect x="1851.500" y="11.500" width="6" height="3" fill="none" stroke="#c9ccd0"/><rect x="1861.500" y="7.500" width="12" height="8" fill="none" stroke="#c9ccd0"/>
<path d="M1893 9l6 6M1899 9l-6 6" stroke="#c9ccd0" stroke-width="1.600"/>
<path d="M1006 33h7l-3.500 4z" fill="#4a4e53"/>
<!-- console left icons -->
<path d="M964 820.500h56M964 845.500h56M964 869.500h56" stroke="#82868c"/>
<rect x="970" y="830" width="8" height="10" fill="#44484d"/><path d="M974 831v8" stroke="#d0d3d6" stroke-width="1.500"/>
<path d="M990 824v16M988 826l2-2 2 2M988 838l2 2 2-2" fill="none" stroke="#3a3e42"/>
<rect x="1006" y="824" width="8" height="17" fill="#14232c" stroke="#6fbfe0" stroke-width=".5"/><path d="M1010 826v13" stroke="#cfe8f2" stroke-width="1.500"/>
<rect x="969" y="848" width="8" height="17" fill="#14232c" stroke="#6fbfe0" stroke-width=".5"/><path d="M973 850v13" stroke="#cfe8f2" stroke-width="1.500"/>
<path d="M981 857h14M983 855l-2 2 2 2M993 855l2 2-2 2" fill="none" stroke="#3a3e42"/>
<rect x="1001" y="851" width="13" height="12" fill="#44484d"/><path d="M1007.500 852v10" stroke="#d0d3d6" stroke-width="1.500"/>
<!-- channels -->
<use href="#cs" x="1021"/><use href="#cs" x="1055"/><use href="#cs" x="1089"/><use href="#cs" x="1123"/><use href="#cs" x="1157"/><use href="#cs" x="1191"/><use href="#cs" x="1225"/><use href="#cs" x="1259"/><use href="#cs" x="1293"/><use href="#cs" x="1327"/><use href="#cs" x="1361"/><use href="#cs" x="1395"/><use href="#cs" x="1429"/><use href="#cs" x="1463"/><use href="#cs" x="1497"/><use href="#cs" x="1531"/>
<use href="#cs" x="1565" style="--b:#c8e6f4;--r:#e0f2fa"/>
<!-- main channel -->
<rect x="1877" y="700" width="33" height="3" fill="#2d3034"/>
<rect x="1878" y="745" width="16" height="15" fill="#7fcdf7"/><rect x="1895" y="745" width="15" height="15" fill="#b7bbc2"/>
<path d="M1881 757l3-9 2 4 3-2 1 7z" fill="#1a5a85"/><path d="M1902.500 748v10M1899 752h7" stroke="#4a4e53" stroke-width="2"/>
<rect x="1881.500" y="763.500" width="24" height="14" rx="1" fill="#9da2a9" stroke="#7d8288"/>
<rect x="1878" y="782" width="32" height="16" fill="#b4b9c0"/><path d="M1878 798.500h32" stroke="#8d9198"/><circle cx="1891" cy="790" r="3.200" fill="#55595e"/><circle cx="1897" cy="790" r="3" fill="none" stroke="#55595e"/>
<rect x="1886" y="862" width="15" height="101" rx="3" fill="#90959b"/>
<rect x="1892.250" y="811" width="1.500" height="150" fill="#1c1e21"/>
<path d="M1886 827h5M1895 827h5M1886 867h5M1895 867h5M1886 885h5M1895 885h5M1886 905h5M1895 905h5M1886 940h5M1895 940h5" stroke="#6a6f74"/>
<rect x="1885.500" y="834" width="15" height="28" rx="1" fill="url(#kd)"/>
<path d="M1886 848.500h14" stroke="#0a0b0c"/><path d="M1886 838h14M1886 852h14M1886 856h14" stroke="#5f6367"/>
<path d="M1878 971.500h32M1878 986.500h32M1894.500 972v14M1878 1001.500h32" stroke="#82868c"/>
<path d="M1864 1020v7l4-3.500zM1034 1020v7l-4-3.500z" fill="#4a4e53"/>
<path d="M1879 26.500h13M1879 36.500h9M1879 46.500h9M1879 56.500h13M1879 67.500h9M1879 77.500h9M1879 87.500h13M1879 97.500h9M1879 107.500h9M1879 117.500h13M1879 147.500h13M1879 177.500h13M1879 208.500h13M1879 329.500h13M1879 453.500h13M1879 574.500h13M1879 693.500h13" stroke="#3d6079"/>
</svg>
<div class="a" style="left:1911px;top:0;width:4px;height:1040px;background:linear-gradient(90deg,#8c9097,#b9bbbe)"></div>
<div class="a" style="left:961px;top:1037px;width:954px;height:3px;background:#e6e6e6"></div>
</body></html>
